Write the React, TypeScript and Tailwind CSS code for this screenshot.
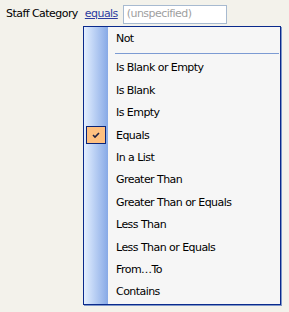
import React from "react";

const items = [
  "Is Blank or Empty",
  "Is Blank",
  "Is Empty",
  "Equals",
  "In a List",
  "Greater Than",
  "Greater Than or Equals",
  "Less Than",
  "Less Than or Equals",
  "From\u2026To",
  "Contains",
];

export default function App() {
  return (
    <div className="w-[289px] h-[312px] bg-[#f3f2eb] text-[11px] text-black relative font-['DejaVu_Sans',sans-serif] tracking-[-0.55px]">
      <div className="flex items-center h-[20px] pt-[4px] box-content">
        <span className="ml-[6px]">Staff Category</span>
        <span className="ml-[7px] text-[#2c3ca0] underline">equals</span>
        <div className="ml-[5px] w-[104px] h-[19px] border border-[#a7bad0] bg-white flex items-center pl-[3px] text-[#a0a0a0]">
          (unspecified)
        </div>
      </div>
      <div className="absolute left-[83px] top-[26px] w-[198px] h-[279px] border border-[#0a2a8c] bg-[#f6f6f6] shadow-[1px_1px_0_#7f97c9] flex">
        <div className="w-[24px] shrink-0 bg-[linear-gradient(to_right,#e3efff,#87a9e6)]" />
        <div className="flex-1 flex flex-col">
          <div className="h-[23px] flex items-center pl-[8px] pt-[1px]">Not</div>
          <div className="h-[7px] flex items-center pl-[7px] pr-[1px]">
            <div className="h-px w-full bg-[#7c9bd3]" />
          </div>
          {items.map((t) => (
            <div key={t} className="h-[22.4px] flex items-center pl-[8px] pt-[1px] relative">
              {t === "Equals" && (
                <div className="absolute left-[-22px] top-[2px] w-[20px] h-[18px] bg-[#ffc080] border border-[#0a2478] flex items-center justify-center">
                  <svg width="9" height="8" viewBox="0 0 9 8">
                    <path d="M1 4 L3 6 L7 2" stroke="#202040" strokeWidth="1.6" fill="none" />
                  </svg>
                </div>
              )}
              {t}
            </div>
          ))}
        </div>
      </div>
    </div>
  );
}
